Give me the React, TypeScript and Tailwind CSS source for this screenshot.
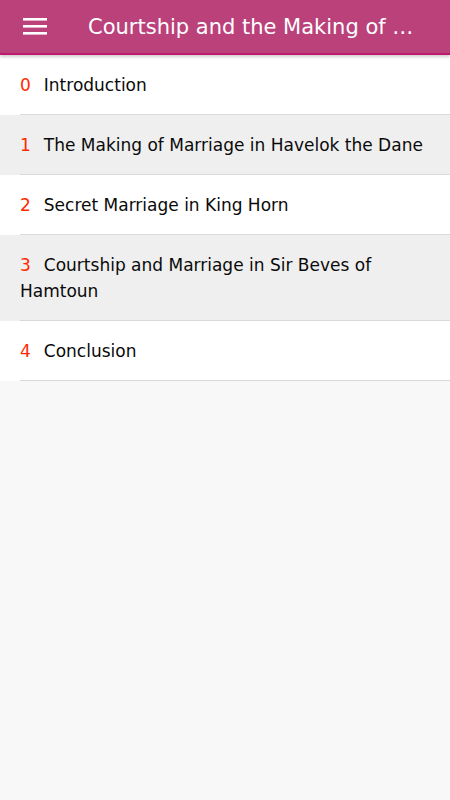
const chapters = [
  "Introduction",
  "The Making of Marriage in Havelok the Dane",
  "Secret Marriage in King Horn",
  "Courtship and Marriage in Sir Beves of Hamtoun",
  "Conclusion",
];

function MenuIcon() {
  return (
    <svg width="24" height="18" viewBox="0 0 24 18" className="block">
      <rect x="0" y="0" width="24" height="2.6" fill="#fff" />
      <rect x="0" y="7" width="24" height="2.6" fill="#fff" />
      <rect x="0" y="14" width="24" height="2.6" fill="#fff" />
    </svg>
  );
}

export default function App() {
  return (
    <div className="flex min-h-[800px] flex-col bg-[#f8f8f8] font-['DejaVu_Sans',sans-serif]">
      <header className="relative z-10 flex h-[55px] items-center border-b-2 border-[#c0186e] bg-[#bb417b] shadow-[0_2px_3px_rgba(0,0,0,0.2)]">
        <button className="flex h-[55px] w-[70px] items-center pl-[23px]">
          <MenuIcon />
        </button>
        <h1 className="min-w-0 flex-1 whitespace-nowrap pl-[18px] pt-[3px] text-[21px] text-white">
          Courtship and the Making of …
        </h1>
      </header>

      <ul>
        {chapters.map((title, i) => (
          <li key={i} className={i % 2 ? "bg-[#efefef]" : "bg-white"}>
            <div className="border-b border-[#d9d9d9] ml-[20px]">
              <p className="-ml-[20px] px-[20px] pt-[17px] pb-[16px] text-[17px] leading-[26px] text-[#0a0a0a]">
                <span className="mr-[13px] font-medium text-[#ff2a00]">{i}</span>
                {title}
              </p>
            </div>
          </li>
        ))}
      </ul>
    </div>
  );
}
